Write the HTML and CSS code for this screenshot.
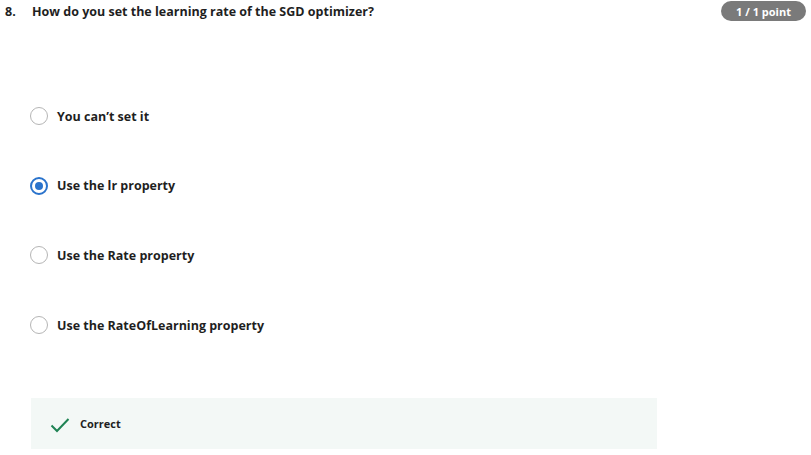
FILE: index.html
```html
<!DOCTYPE html>
<html>
<head>
<meta charset="utf-8">
<link rel="stylesheet" href="styles.css">
</head>
<body>
<div class="question">
  <div class="header">
    <span class="num">8.</span>
    <span class="qtext">How do you set the learning rate of the SGD optimizer?</span>
    <span class="badge">1 / 1 point</span>
  </div>
  <div class="options">
    <div class="option"><span class="radio"></span><span class="label">You can’t set it</span></div>
    <div class="option"><span class="radio checked"></span><span class="label">Use the lr property</span></div>
    <div class="option"><span class="radio"></span><span class="label">Use the Rate property</span></div>
    <div class="option"><span class="radio"></span><span class="label">Use the RateOfLearning property</span></div>
  </div>
  <div class="feedback">
    <svg class="check" width="20" height="16" viewBox="0 0 20 16"><path d="M1.5 8.5 L7 14 L18.5 2" fill="none" stroke="#1f8354" stroke-width="2"/></svg>
    <span class="fb-text">Correct</span>
  </div>
</div>
</body>
</html>
```
FILE: styles.css
```css
* { box-sizing: border-box; }
body {
  margin: 0;
  font-family: "Open Sans", "Liberation Sans", sans-serif;
  color: #1f1f1f;
  background: #fff;
}
.question { width: 811px; }
.header {
  display: flex;
  align-items: center;
  height: 22px;
  padding-left: 5px;
  padding-right: 5px;
  font-size: 12.5px;
  font-weight: 700;
}
.num { width: 27px; }
.qtext { flex: 1; }
.badge {
  background: #7a7a7a;
  color: #fff;
  font-size: 11px;
  font-weight: 700;
  border-radius: 10px;
  height: 20px;
  width: 85px;
  display: flex;
  align-items: center;
  justify-content: center;
}
.options {
  padding-left: 30px;
  padding-top: 85px;
  display: flex;
  flex-direction: column;
  gap: 51.7px;
}
.option {
  display: flex;
  align-items: center;
  height: 18px;
  font-size: 12.5px;
  font-weight: 700;
}
.radio {
  width: 18px;
  height: 18px;
  border-radius: 50%;
  border: 1.5px solid #b5b5b5;
  margin-right: 9px;
  display: flex;
  align-items: center;
  justify-content: center;
}
.radio.checked { border: 2px solid #2a73cc; }
.radio.checked::after {
  content: "";
  width: 8px;
  height: 8px;
  border-radius: 50%;
  background: #2a73cc;
}
.feedback {
  margin-left: 31px;
  margin-top: 64px;
  width: 626px;
  height: 51px;
  background: #f3f8f6;
  display: flex;
  align-items: center;
  padding-left: 19px;
  padding-bottom: 1px;
}
.check { margin-right: 10px; margin-top: 3px; }
.fb-text { font-size: 11px; font-weight: 700; }
```
